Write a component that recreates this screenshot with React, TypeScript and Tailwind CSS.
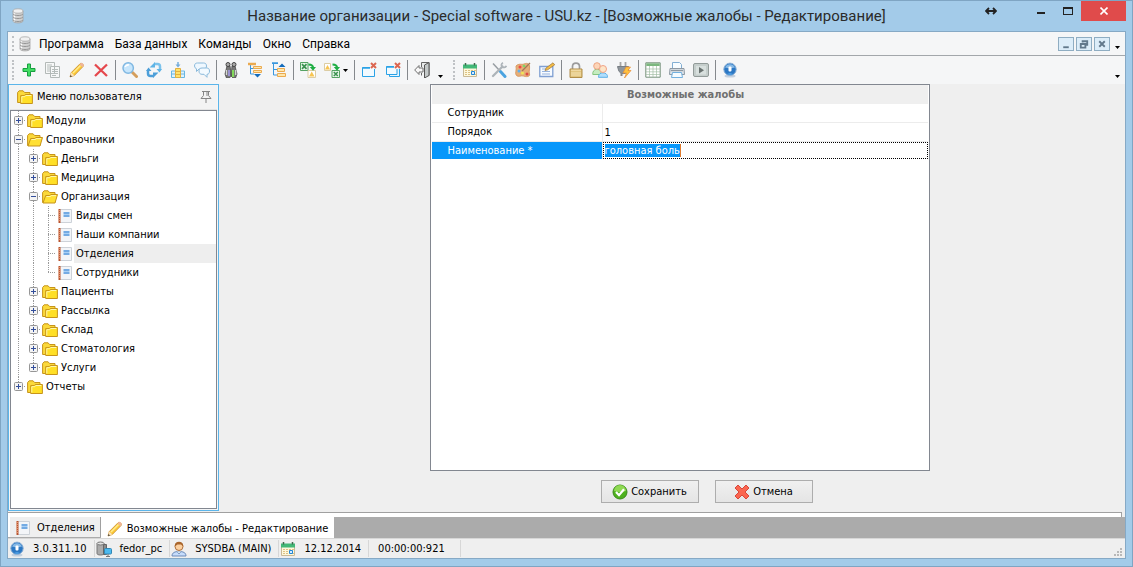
import type { ReactNode } from "react";

function Svg({ children }: { children: ReactNode }) {
  return (
    <svg viewBox="0 0 16 16" className="size-4 shrink-0" fill="none" aria-hidden>
      {children}
    </svg>
  );
}

function Database() {
  return (
    <Svg>
      <path d="M3 3v10c0 2.500 10 2.500 10 0V3z" fill="#d2d2d2" stroke="#a2a2a2" strokeWidth=".8" />
      <path d="M4.500 4v10" stroke="#fff" strokeWidth="1.500" />
      <path d="M3 6c1 2 9 2 10 0M3 9c1 2 9 2 10 0M3 12c1 2 9 2 10 0" stroke="#969696" />
      <ellipse cx="8" cy="3" rx="5" ry="2.200" fill="#f1f1f1" stroke="#a8a8a8" strokeWidth=".8" />
    </Svg>
  );
}

function Folder({ open }: { open?: boolean }) {
  return (
    <Svg>
      <path d="M.6 13.500V3.500l1.500-1.700h4l1.500 1.700h5.400v10z" fill="#fbd93a" stroke="#c7941a" />
      {open ? (
        <>
          <path d="M1 14 3.700 6.500h4l1-1h6.800L13 14z" fill="#ffe034" stroke="#c7941a" />
          <path d="M4.500 7.500h4l.7-.9H14" stroke="#fff7ac" />
        </>
      ) : (
        <>
          <path d="M3.700 14.500V6.600h3.500l1-1.100h7.200v9z" fill="#ffdf26" stroke="#c7941a" />
          <path d="M4.800 13.500V7.700h3l1-1.200h5.500" stroke="#fff7ac" />
        </>
      )}
    </Svg>
  );
}

function Doc() {
  return (
    <Svg>
      <path d="M2.500 1.500h12v13h-12z" fill="#f3f5f8" stroke="#cdd2d8" />
      <path d="M2.500 1v14" stroke="#b9532d" strokeWidth="2" />
      <path d="M1 2.500h2M1 4.500h2M1 6.500h2M1 8.500h2M1 10.500h2M1 12.500h2" stroke="#e9a483" strokeWidth=".8" />
      <path d="M6.500 5h6M6.500 8h6" stroke="#4b93dc" strokeWidth="1.500" />
      <path d="M6.500 6.500h6" stroke="#a9d0f5" />
    </Svg>
  );
}

function Pencil() {
  return (
    <Svg>
      <path d="M1 15 2.300 10.500 11 1.800c1.500-1.500 4.300 1 3 2.800L5.300 13.500z" fill="#fbc936" stroke="#c98a2b" strokeWidth=".8" />
      <path d="M4 11 11.500 3.500" stroke="#ffeb8f" strokeWidth="1.500" />
      <path d="m10.500 2.300 1-1c1.500-1 4 1 2.900 2.700l-1 1.200z" fill="#efb59a" />
      <path d="m2.300 10.500 3 3L1 15z" fill="#fbe3bb" />
      <path d="M1 15l.5-2 1.500 1.500z" fill="#333" />
    </Svg>
  );
}

function Info() {
  return (
    <Svg>
      <ellipse cx="8" cy="14" rx="5.500" ry="1.500" fill="#c3d0de" />
      <circle cx="8" cy="7.300" r="6.200" fill="#2c78c4" stroke="#8fb2d6" />
      <path d="M3 5.500a5.400 5.400 0 0 1 10 0c-2.500 1-7.500 1-10 0" fill="#86b9e6" />
      <path d="M5 12c2 1 4 1 6 0-2-1-4-1-6 0" fill="#56a8ea" />
      <rect x="6.500" y="4.500" width="3" height="5" rx="1" fill="#fff" />
    </Svg>
  );
}

function Calendar() {
  return (
    <Svg>
      <path d="M1.500 3.500h13v11h-13z" fill="#fdf8dc" stroke="#c8b996" />
      <path d="M1 2.500h14v4H1z" fill="#42b877" />
      <path d="M3.500 1v2.500M12.500 1v2.500" stroke="#40694e" strokeWidth="1.500" />
      <path d="M3 8.500h2m1 0h2m1 0h2m1 0h2M3 10.500h2m1 0h2M3 12.500h2m1 0h2m4 0h2" stroke="#dcc184" strokeWidth="1.200" />
      <path d="M9.500 9.500h3v3h-3z" fill="#d7ebff" stroke="#1f86d6" />
    </Svg>
  );
}

function Users({ single }: { single?: boolean }) {
  if (single) {
    return (
      <Svg>
        <path d="M1 15c0-3.500 3-4.500 7-4.500s7 1 7 4.500z" fill="#c5dcfb" stroke="#6c8bb8" />
        <path d="m6 10.500 2 2.500 2-2.500" fill="#fff" stroke="#7798c0" />
        <circle cx="8" cy="5.500" r="4" fill="#fbd0a0" stroke="#b0703c" />
        <path d="M3.800 5.500C3-.8 13-.8 12.200 5.500L10 3.500H6.500z" fill="#a9652c" />
      </Svg>
    );
  }
  return (
    <Svg>
      <path d="M.8 12.500C0 5.500 10 5.500 9.200 12.500z" fill="#c5ecc0" stroke="#86c67f" />
      <circle cx="5" cy="4" r="3.300" fill="#fdd5b8" stroke="#eda583" />
      <path d="M6.500 15.300c-.5-6 9.500-6 9 0z" fill="#b0defd" stroke="#5cb0e6" />
      <circle cx="11" cy="7" r="3.500" fill="#fde5c8" stroke="#f0a287" />
    </Svg>
  );
}

function TreeList({ up }: { up?: boolean }) {
  if (up) {
    return (
      <Svg>
        <path d="M1 1.500h6M2.500 1.500V13H6M2.500 7.500H6" stroke="#3a97de" />
        <path d="M1 1h6" stroke="#3a97de" strokeWidth="1.500" />
        <path d="M7.500 5 11 1.500 14.500 5z" fill="#146cbb" />
        <path d="M6.500 6.500h7v3h-7zM6.500 11.500h8v3h-8z" fill="#ffe7ab" stroke="#eaaa50" />
      </Svg>
    );
  }
  return (
    <Svg>
      <path d="M3.500 3v9H7M3.500 6.500H7" stroke="#3a97de" />
      <path d="M1 2h8" stroke="#eaaa50" strokeWidth="2.500" />
      <path d="M6.500 4.500h8v2h-8zM6.500 8.500h8v2h-8z" fill="#ffe7ab" stroke="#eaaa50" />
      <path d="m7 12 3.500 3.500L14 12z" fill="#146cbb" />
    </Svg>
  );
}

function Excel({ out }: { out?: boolean }) {
  return (
    <Svg>
      {out ? (
        <>
          <path d="M.5 1.500h6v7h-6z" fill="#fff" stroke="#dccda4" />
          <path d="m1 7.500 2.500-4.500L6 7.500z" fill="#f7c552" />
          <path d="M8 8.500h7.500v7H8z" fill="#e8f6e9" stroke="#55a263" />
          <path d="m9.800 10 4 4m0-4-4 4" stroke="#3b9150" strokeWidth="1.500" />
        </>
      ) : (
        <>
          <path d="M.5.500h7.500v8H.5z" fill="#e8f6e9" stroke="#55a263" />
          <path d="m2 2.200 4.500 4.600m0-4.600L2 6.800" stroke="#3b9150" strokeWidth="1.700" />
          <path d="M8 8.500h7.500v7H8z" fill="#fff" stroke="#dccda4" />
          <path d="m9 14.500 2.700-5 2.800 5z" fill="#f7c552" />
        </>
      )}
      <path d="M8.500 2.500c3 0 4.500 1 4.500 3.500" stroke="#1fae44" strokeWidth="2.200" />
      <path d="M9.800 5H16l-3 3.800z" fill="#1fae44" />
    </Svg>
  );
}

function CloseWindow({ all }: { all?: boolean }) {
  return (
    <Svg>
      {all && <path d="M4.500 6.500h10v8h-10z" fill="#e8f6ff" stroke="#2aa2e6" />}
      <path d={all ? "M1.500 4.500h10.500v8H1.500z" : "M1.500 5.500h12v9h-12z"} fill="#f2faff" stroke="#2aa2e6" />
      <path d={all ? "M1.500 5h8" : "M1.500 6h9"} stroke="#2aa2e6" strokeWidth="1.500" />
      <path d="M9 0h7v7H9z" fill="#f5f6f7" />
      <path d="m10 1 5 5m0-5-5 5" stroke="#db6651" strokeWidth="2" />
    </Svg>
  );
}

const icons = {
  add: (
    <Svg>
      <path d="M6.500 2h3v4.500H14v3H9.500V14h-3V9.500H2v-3h4.500z" fill="#42dd63" stroke="#179f40" />
    </Svg>
  ),
  copy: (
    <Svg>
      <path d="M.5.500h9v11h-9zM5.500 4.500h9v11h-9z" fill="#f7f8f8" stroke="#b3b9b7" />
      <path d="M2 3h5M2 5h3M2 7h3M2 9h3M7 7.500h6M7 9.500h6M7 11.500h6M7 13.500h4" stroke="#b5bcba" />
    </Svg>
  ),
  edit: <Pencil />,
  remove: (
    <Svg>
      <path d="M2 2.500 14 14M14 2.500 2 14" stroke="#e5484d" strokeWidth="2.300" />
    </Svg>
  ),
  search: (
    <Svg>
      <path d="m10.500 10.500 4 4" stroke="#d49e5c" strokeWidth="3" strokeLinecap="round" />
      <circle cx="6.200" cy="6" r="5.200" fill="#c7e6fc" stroke="#80b8e2" strokeWidth="1.500" />
      <path d="M3 5c1-2 2-2.500 4-2" stroke="#fff" strokeWidth="1.500" />
    </Svg>
  ),
  refresh: (
    <Svg>
      <path d="M8 2h3.500c1.500 0 2.500 1 2.500 2.500V8" stroke="#7cc3ec" strokeWidth="2.500" />
      <path d="M10.500 7H16l-2.500 3.500zM9 0v5.500H3.500z" fill="#5fb4e6" />
      <path d="M8 14H4.500C3 14 2 13 2 11.500V8" stroke="#4d9fd9" strokeWidth="2.500" />
      <path d="M0 9h5.500L2.500 5.500zM7 16v-5.500h5.500z" fill="#4d9fd9" />
    </Svg>
  ),
  column: (
    <Svg>
      <path d="M1.500 9v6.500h13V9z" fill="#dff1fc" stroke="#69b7e2" />
      <path d="M1.500 12h13" stroke="#69b7e2" />
      <path d="M5.500 6.500h5v9h-5z" fill="#ffe26a" stroke="#e3b03f" />
      <path d="M5.500 9.500h5M5.500 12.500h5" stroke="#e3b03f" />
      <path d="M8 0v3" stroke="#74acdb" strokeWidth="1.500" />
      <path d="M5.500 2.500h5L8 5.500z" fill="#74acdb" />
    </Svg>
  ),
  chat: (
    <Svg>
      <path d="M.5 4c0-2 1-3 3-3h6c2 0 3 1 3 3s-1 3-3 3H5L2.500 9.500V6.800Q.5 6 .5 4z" fill="#eff8ff" stroke="#8bbadb" />
      <path d="M5 9c0-2 1-3 3-3h4.500c2 0 3 1 3 3s-.7 3.300-2.500 3.300v3l-3-3H8c-2 0-3-1.300-3-3.300z" fill="#f3faff" stroke="#8bbadb" />
    </Svg>
  ),
  find: (
    <Svg>
      <path d="M4 4h3l1.500 10-2.500 2H3.500L2 12zM9 4h3l2 8-1.500 4H10l-2-2z" fill="#777" stroke="#494949" strokeWidth=".8" />
      <path d="M3.500 8v5M12.700 8v5" stroke="#d5d8d5" strokeWidth="1.300" />
      <path d="M6 8v6" stroke="#a79cf0" strokeWidth="1.500" />
      <path d="M10 8v7" stroke="#83d95a" strokeWidth="2.200" />
      <circle cx="5" cy="2.500" r="2" fill="#aaa" stroke="#444" />
      <circle cx="11" cy="2.500" r="2" fill="#aaa" stroke="#444" />
    </Svg>
  ),
  expand: <TreeList />,
  collapse: <TreeList up />,
  toExcel: <Excel />,
  fromExcel: <Excel out />,
  closeOne: <CloseWindow />,
  closeAll: <CloseWindow all />,
  exit: (
    <Svg>
      <path d="M7.500 5V.500h7.500v13h-3M7.500 11v2.500" fill="#e9ebeb" stroke="#666" />
      <path d="m10.500 3 4.500-2.500v13L10.500 16z" fill="#c4c9c9" stroke="#555" />
      <path d="M.7 8 5 3.500V6h4v4H5v2.500z" fill="#f8f8f8" stroke="#707070" />
    </Svg>
  ),
  calendar: <Calendar />,
  tools: (
    <Svg>
      <path d="M2 1.500 9 9" stroke="#989ea3" strokeWidth="1.500" />
      <path d="m9.500 9.500 4.500 5" stroke="#4aa3e0" strokeWidth="3" strokeLinecap="round" />
      <path d="M2 14 11.500 4.500" stroke="#adb4b9" strokeWidth="2.300" strokeLinecap="round" />
      <path d="M12 .8c-2 1-2 3-.7 4 1 1 3.200 1 4-1" stroke="#adb4b9" strokeWidth="1.800" />
    </Svg>
  ),
  palette: (
    <Svg>
      <path d="M1 4c3-3 6-1 8-2s5-1 5.500 2-1 5 0 8-4 3-6 2-5 1.500-7-.5S2 8 1 4z" fill="#e6ae78" stroke="#d99a63" />
      <circle cx="5" cy="5" r="1.500" fill="#ee4a44" />
      <circle cx="9" cy="4" r="1.300" fill="#7bd869" />
      <circle cx="4" cy="9" r="1.500" fill="#5bb0ef" />
      <circle cx="7.500" cy="11" r="1.500" fill="#eee657" />
      <circle cx="12" cy="12" r="1.500" fill="#df4a44" />
      <path d="m7 9 8-8" stroke="#a37a54" strokeWidth="1.300" />
    </Svg>
  ),
  note: (
    <Svg>
      <path d="M.8 4.500h13v10H.8z" fill="#f7fbff" stroke="#7f9fd2" strokeWidth="1.300" />
      <path d="M3 7h4M3 9.500h8M3 12h8" stroke="#97b3de" />
      <path d="m6 8.500 1-2.500L14 .8l1.700 2-7 5z" fill="#f4bd45" stroke="#9c7439" strokeWidth=".7" />
    </Svg>
  ),
  lock: (
    <Svg>
      <path d="M4.500 7V4.500c0-4.500 7-4.500 7 0V7" stroke="#9b9b9b" strokeWidth="1.700" />
      <path d="M2 7h12v8.500H2z" fill="#e2c57e" stroke="#b08d48" />
      <path d="M3 8.200h10M3 11h10M3 13h10" stroke="#f5e3b4" />
    </Svg>
  ),
  users: <Users />,
  plug: (
    <Svg>
      <path d="M4.500 0v4M9.500 0v4" stroke="#a5a5a5" strokeWidth="1.800" />
      <path d="M1.500 4.500h11V7c0 6-9 6-10 1z" fill="#8e959b" stroke="#787e84" />
      <path d="M5.500 11v3" stroke="#888" strokeWidth="2" />
      <path d="m10 5-3 6h3.500l-2 5 6.500-7.500h-3L14.500 5z" fill="#ffc23e" stroke="#ea8c34" strokeWidth=".7" />
    </Svg>
  ),
  table: (
    <Svg>
      <path d="M.8.800h14.400v14.400H.8z" fill="#fff" stroke="#75907a" />
      <path d="M1.300 1.300h13.400v2.700H1.300z" fill="#7bb77e" />
      <path d="M1 7h14M1 9.800h14M1 12.500h14M4.500 4v11M8 4v11M11.500 4v11" stroke="#a4bfa6" strokeWidth=".7" />
    </Svg>
  ),
  print: (
    <Svg>
      <path d="M3.500 7V.500h7l2 2V7" fill="#f7fcff" stroke="#82aed3" />
      <path d="M1 6.500h14l.5 6H.5z" fill="#dde3e9" stroke="#8d98a2" />
      <path d="M2 8.500h12" stroke="#8d98a2" strokeWidth="1.300" />
      <path d="M3.500 10.500h9l1 5h-11z" fill="#f5fbff" stroke="#72b0de" />
    </Svg>
  ),
  play: (
    <Svg>
      <rect x=".5" y="1.500" width="15" height="13" rx="1.500" fill="#c5cecc" stroke="#929b99" />
      <path d="M3 4h10v8.500H3z" fill="#d8e0de" />
      <path d="m6 5 5 3.300-5 3.200z" fill="#6a7371" />
    </Svg>
  ),
  about: <Info />,
};

type Tool = { id: keyof typeof icons; label: string };

const mainTools: Tool[][] = [
  [
    { id: "add", label: "Добавить" },
    { id: "copy", label: "Копировать" },
    { id: "edit", label: "Изменить" },
    { id: "remove", label: "Удалить" },
  ],
  [
    { id: "search", label: "Поиск" },
    { id: "refresh", label: "Обновить" },
    { id: "column", label: "Столбцы" },
    { id: "chat", label: "Сообщения" },
  ],
  [
    { id: "find", label: "Найти" },
    { id: "expand", label: "Развернуть" },
    { id: "collapse", label: "Свернуть" },
  ],
  [
    { id: "toExcel", label: "Экспорт" },
    { id: "fromExcel", label: "Импорт" },
  ],
  [
    { id: "closeOne", label: "Закрыть окно" },
    { id: "closeAll", label: "Закрыть все окна" },
  ],
  [{ id: "exit", label: "Выход" }],
];

const extraTools: Tool[][] = [
  [{ id: "calendar", label: "Календарь" }],
  [
    { id: "tools", label: "Настройки" },
    { id: "palette", label: "Оформление" },
    { id: "note", label: "Заметка" },
  ],
  [
    { id: "lock", label: "Блокировка" },
    { id: "users", label: "Пользователи" },
    { id: "plug", label: "Подключение" },
  ],
  [
    { id: "table", label: "Таблица" },
    { id: "print", label: "Печать" },
    { id: "play", label: "Видео" },
  ],
  [{ id: "about", label: "О программе" }],
];

function Caret() {
  return (
    <svg viewBox="0 0 5 3" className="h-[3px] w-[5px]" aria-hidden>
      <path d="M0 0h5L2.500 3z" fill="#000" />
    </svg>
  );
}

function Grip() {
  return (
    <span className="flex w-[9px] shrink-0 justify-center self-stretch py-1">
      <span className="border-l-2 border-dotted border-[#bfc2c5]" />
    </span>
  );
}

function ToolGroups({ groups }: { groups: Tool[][] }) {
  return groups.map((group, i) => (
    <div key={i} className="flex items-center">
      {i > 0 && <span className="mx-[2px] h-5 w-px bg-[#85898d]" />}
      {group.map((tool) => (
        <button key={tool.id} type="button" aria-label={tool.label} className="flex h-6 items-center px-1">
          {icons[tool.id]}
          {tool.id === "fromExcel" && (
            <span className="ml-[3px]">
              <Caret />
            </span>
          )}
        </button>
      ))}
    </div>
  ));
}

// Guides, one per level: "v" runs through, "t" branches right, "l" is the last branch,
// "+" and "-" are boxes on a running line, "e" is a closed box where the line ends
type Row = { name: string; guides: string; kind: "folder" | "open" | "doc"; selected?: boolean };

const rows: Row[] = [
  { name: "Модули", guides: "+", kind: "folder" },
  { name: "Справочники", guides: "-", kind: "open" },
  { name: "Деньги", guides: "v+", kind: "folder" },
  { name: "Медицина", guides: "v+", kind: "folder" },
  { name: "Организация", guides: "v-", kind: "open" },
  { name: "Виды смен", guides: "vvt", kind: "doc" },
  { name: "Наши компании", guides: "vvt", kind: "doc" },
  { name: "Отделения", guides: "vvt", kind: "doc", selected: true },
  { name: "Сотрудники", guides: "vvl", kind: "doc" },
  { name: "Пациенты", guides: "v+", kind: "folder" },
  { name: "Рассылка", guides: "v+", kind: "folder" },
  { name: "Склад", guides: "v+", kind: "folder" },
  { name: "Стоматология", guides: "v+", kind: "folder" },
  { name: "Услуги", guides: "ve", kind: "folder" },
  { name: "Отчеты", guides: "e", kind: "folder" },
];

function Guide({ kind }: { kind: string }) {
  const box = kind === "+" || kind === "-" || kind === "e";
  const drawing = (
    <svg viewBox="0 0 15 19" className="h-[19px] w-[15px]" fill="none" aria-hidden>
      <path d={kind === "l" || kind === "e" ? "M7.500 0V10" : "M7.500 0V19"} stroke="#9a9a9a" strokeDasharray="1 1" />
      {kind !== "v" && <path d="M7 9.500h8" stroke="#9a9a9a" strokeDasharray="1 1" />}
      {box && (
        <>
          <rect x="3.500" y="5.500" width="8" height="8" rx="1" fill="#f4f4f4" stroke="#969696" />
          <path d={kind === "-" ? "M5 9.500h5" : "M5 9.500h5M7.500 7v5"} stroke="#334e9b" />
        </>
      )}
    </svg>
  );
  return box ? (
    <button type="button" aria-label={kind === "-" ? "Свернуть" : "Развернуть"}>
      {drawing}
    </button>
  ) : (
    drawing
  );
}

function Sidebar() {
  return (
    <aside className="flex w-[211px] shrink-0 flex-col border border-[#5bb5ea] bg-[#f5f6f7] px-px pb-px">
      <header className="flex h-[25px] items-center border-b border-[#e3e3e3] bg-[#f3f3f3] pr-[5px] pl-[7px]">
        <Folder />
        <h2 className="ml-1 flex-1">Меню пользователя</h2>
        <button type="button" aria-label="Закрепить">
          <svg viewBox="0 0 12 12" className="size-3" fill="none" aria-hidden>
            <path d="M2 .5h8M3.500.500v4L1 7.500h10L8.500 4.500v-4M7 .5v4.500M6 7.500V12" stroke="#858585" />
          </svg>
        </button>
      </header>
      <ul className="flex-1 border border-[#828790] bg-white">
        {rows.map((row) => (
          <li key={row.name} className="flex h-[19px] items-center">
            {row.guides.split("").map((g, i) => (
              <Guide key={i} kind={g} />
            ))}
            <span className="ml-px flex">{row.kind === "doc" ? <Doc /> : <Folder open={row.kind === "open"} />}</span>
            <a href="#" className={["ml-px flex-1 pl-[2px] leading-[19px]", row.selected ? "bg-[#eeeeee]" : ""].join(" ")}>
              {row.name}
            </a>
          </li>
        ))}
      </ul>
    </aside>
  );
}

function FormRow({ id, label, value, active }: { id: string; label: string; value: string; active?: boolean }) {
  return (
    <tr>
      <th
        scope="row"
        className={[
          "w-[171px] border-r border-[#ececec] p-0 pl-4 text-left font-normal",
          active ? "h-[17px] bg-[#0797fb] text-white" : "h-[19px] border-b",
        ].join(" ")}
      >
        <label htmlFor={id}>{label}</label>
      </th>
      {active ? (
        <td className="p-0">
          <div className="flex h-[17px] items-center border border-dotted border-black pl-px">
            <input
              id={id}
              defaultValue={value}
              className="h-[13px] [field-sizing:content] border-r border-[#e07b2d] bg-[#0797fb] text-white outline-none"
            />
          </div>
        </td>
      ) : (
        <td className="border-b border-[#ececec] p-0">
          <input id={id} defaultValue={value} className="block h-[17px] w-full pl-[2px] outline-none" />
        </td>
      )}
    </tr>
  );
}

function Editor() {
  return (
    <main className="flex flex-1 flex-col items-center bg-[#efefef] pb-2 pl-[15px]">
      <form className="flex w-full max-w-[500px] flex-1 flex-col">
        <div className="flex-1 border border-[#828790] bg-white px-px">
          <table className="w-full border-separate border-spacing-0">
            <caption className="h-[19px] bg-[#efefef] pl-3 leading-[19px] font-bold text-[#707070]">
              Возможные жалобы
            </caption>
            <tbody>
              <FormRow id="employee" label="Сотрудник" value="" />
              <FormRow id="order" label="Порядок" value="1" />
              <FormRow id="title" label="Наименование *" value="головная боль" active />
            </tbody>
          </table>
        </div>
        <div className="flex justify-center gap-4 pt-[9px] pl-[54px]">
          <button
            type="button"
            className="flex h-[23px] w-[98px] items-center justify-center gap-[3px] border border-[#adadad] bg-linear-to-b from-[#f0f0f0] to-[#e5e5e5]"
          >
            <Svg>
              <circle cx="8" cy="8" r="7" fill="#4eb11e" stroke="#3c8a1c" />
              <path d="M2 7a6 6 0 0 1 12 0q-6 2-12 0" fill="#8fd952" />
              <path d="m4 8 3 3.200 5-6" stroke="#fff" strokeWidth="2.200" />
            </Svg>
            Сохранить
          </button>
          <button
            type="button"
            className="flex h-[23px] w-[98px] items-center justify-center gap-[3px] border border-[#adadad] bg-linear-to-b from-[#f0f0f0] to-[#e5e5e5]"
          >
            <Svg>
              <path d="m4 1 4 4 4-4 3 3-4 4 4 4-3 3-4-4-4 4-3-3 4-4-4-4z" fill="#fa6650" stroke="#d9473b" strokeLinejoin="round" />
            </Svg>
            Отмена
          </button>
        </div>
      </form>
    </main>
  );
}

function TitleBar() {
  return (
    <header className="relative flex h-[30px] shrink-0 items-start justify-center">
      <span className="absolute top-[7px] left-[2px]">
        <Database />
      </span>
      <h1 className="pt-1 font-[Roboto,'Noto_Sans',sans-serif] text-[15px] leading-[22px] text-[#2b2b2b]">
        Название организации - Special software - USU.kz - [Возможные жалобы - Редактирование]
      </h1>
      <div className="absolute top-0 -right-px flex h-5 items-center">
        <svg viewBox="0 0 12 8" className="mr-[31px] h-2 w-3" fill="none" aria-hidden>
          <path d="M1 4h10M4 1 1 4l3 3M8 1l3 3-3 3" stroke="#222" strokeWidth="1.800" />
        </svg>
        <button type="button" aria-label="Свернуть" className="flex h-5 w-[26px] items-center justify-center">
          <span className="mt-1 h-[2px] w-2 bg-[#222]" />
        </button>
        <button type="button" aria-label="Развернуть" className="flex h-5 w-[27px] items-center justify-center">
          <span className="h-2 w-[10px] border border-t-2 border-[#222]" />
        </button>
        <button type="button" aria-label="Закрыть" className="flex h-5 w-[45px] items-center justify-center bg-[#e04b4b]">
          <svg viewBox="0 0 8 8" className="size-2" fill="none" aria-hidden>
            <path d="m.5.500 7 7m0-7-7 7" stroke="#fff" strokeWidth="1.600" />
          </svg>
        </button>
      </div>
    </header>
  );
}

const menu = ["Программа", "База данных", "Команды", "Окно", "Справка"];

const childButtons = [
  { label: "Свернуть окно", d: "M4 10h6" },
  { label: "Восстановить окно", d: "M5.500 5V3.500h5v4H9M3.500 6.500h5v4h-5z" },
  { label: "Закрыть окно", d: "m4 3.500 6 6m0-6-6 6" },
];

function MenuBar() {
  return (
    <nav className="flex h-6 shrink-0 items-center border-b border-[#a3a7ab] bg-[#f5f6f7] font-[Roboto,'Noto_Sans',sans-serif] text-xs text-black">
      <Grip />
      <Database />
      <ul className="ml-[6px] flex flex-1 gap-[11px]">
        {menu.map((item) => (
          <li key={item}>
            <button type="button">{item}</button>
          </li>
        ))}
      </ul>
      <div className="mr-[5px] flex gap-[2px]">
        {childButtons.map((b) => (
          <button key={b.label} type="button" aria-label={b.label} className="border border-[#8fadc2] bg-[#dcedf9]">
            <svg viewBox="0 0 14 13" className="h-3 w-[14px]" fill="none" aria-hidden>
              <path d={b.d} stroke="#62798c" strokeWidth="2" />
            </svg>
          </button>
        ))}
      </div>
      <button type="button" aria-label="Параметры меню" className="mt-2 mr-[5px]">
        <Caret />
      </button>
    </nav>
  );
}

function Toolbar() {
  return (
    <div className="flex h-7 shrink-0 items-center bg-[#f5f6f7]" role="toolbar">
      <Grip />
      <ToolGroups groups={mainTools} />
      <button type="button" aria-label="Ещё кнопки" className="mt-3 mr-[6px] ml-1">
        <Caret />
      </button>
      <Grip />
      <ToolGroups groups={extraTools} />
      <button type="button" aria-label="Параметры панели" className="mt-3 mr-[5px] ml-auto">
        <Caret />
      </button>
    </div>
  );
}

function StatusItem({ icon, children }: { icon?: ReactNode; children: ReactNode }) {
  return (
    <li className="flex h-[17px] items-center gap-2 border-r border-[#d7d7d7] pr-[7px] pl-px">
      {icon}
      {children}
    </li>
  );
}

export default function App() {
  return (
    <div className="flex min-h-screen flex-col border border-[#7fa5c3] bg-[#a3cbe9] px-[7px] pb-[7px] font-['DejaVu_Sans_Condensed','DejaVu_Sans',sans-serif] text-[11px] leading-4 text-black">
      <TitleBar />
      <div className="-mx-px flex flex-1 flex-col border border-[#86a9c5] bg-[#efefef]">
        <MenuBar />
        <Toolbar />
        <div className="flex flex-1">
          <Sidebar />
          <Editor />
        </div>
        <div className="mt-px mr-[3px] h-[5px] border-t border-r border-[#a0a0a0] bg-white" />
        <div className="flex h-[22px] items-start border-b border-[#d7d7d7] bg-[#ababab]">
          <button type="button" className="flex h-5 items-center gap-[6px] border-r border-l-2 border-r-[#a0a0a0] border-l-white bg-[#efefef] px-[5px] pt-px">
            <Doc />
            Отделения
          </button>
          <button type="button" className="flex h-[21px] items-center gap-1 bg-white px-[6px] pt-[2px]">
            <Pencil />
            Возможные жалобы - Редактирование
          </button>
        </div>
        <footer className="flex h-[19px] items-center justify-between">
          <ul className="flex items-center">
            <StatusItem icon={<Info />}>3.0.311.10</StatusItem>
            <StatusItem
              icon={
                <Svg>
                  <path d="M1 2.500v10c0 2 7 2 7 0v-10z" fill="#aaa" stroke="#777" />
                  <ellipse cx="4.500" cy="2.500" rx="3.500" ry="1.500" fill="#e2e2e2" stroke="#777" />
                  <path d="M7.500 3.500h3v10h-3z" fill="#8a8a8a" stroke="#666" />
                  <rect x="8.500" y="7.500" width="7" height="5.500" rx="1" fill="#4cbaf0" stroke="#3187b5" />
                  <path d="M12 13v2M10 15.500h4" stroke="#777" />
                </Svg>
              }
            >
              fedor_pc
            </StatusItem>
            <StatusItem icon={<Users single />}>SYSDBA (MAIN)</StatusItem>
            <StatusItem icon={<Calendar />}>12.12.2014</StatusItem>
            <StatusItem>
              <span className="px-2">00:00:00:921</span>
            </StatusItem>
          </ul>
          <svg viewBox="0 0 9 9" className="mt-2 mr-[3px] size-[9px]" fill="#b8b8b8" aria-hidden>
            <path d="M7 0h2v2H7zM7 3h2v2H7zM7 6h2v2H7zM4 3h2v2H4zM4 6h2v2H4zM1 6h2v2H1z" />
          </svg>
        </footer>
      </div>
    </div>
  );
}
